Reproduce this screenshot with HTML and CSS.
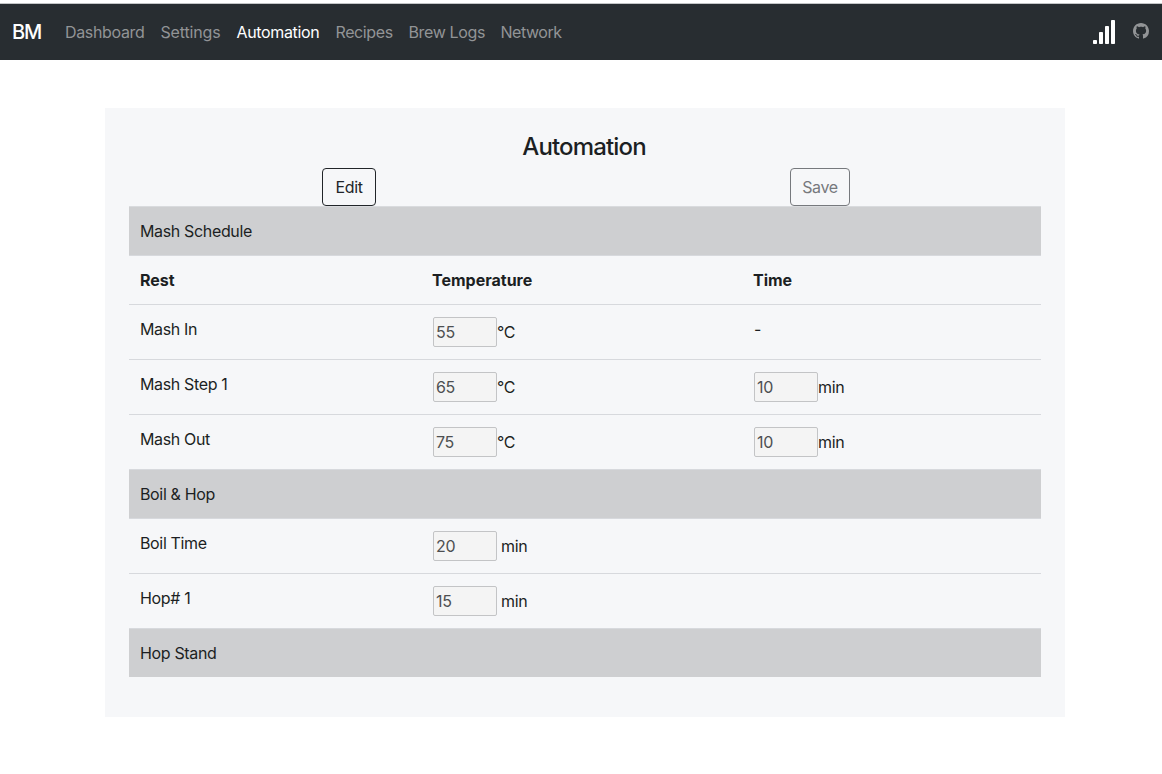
FILE: index.html
```
<!DOCTYPE html>
<html lang="en">
<head>
<meta charset="utf-8">
<title>BM - Automation</title>
<link rel="stylesheet" href="styles.css">
</head>
<body>
<nav class="navbar">
  <a class="brand">BM</a>
  <div class="nav-links">
    <a class="w-dashboard">Dashboard</a>
    <a class="w-settings">Settings</a>
    <a class="w-automation active">Automation</a>
    <a class="w-recipes">Recipes</a>
    <a class="w-logs">Brew Logs</a>
    <a class="w-network">Network</a>
  </div>
  <svg class="signal" width="22" height="24" viewBox="0 0 22 24" fill="#fff">
    <rect x="0" y="20" width="4" height="4" rx=".8"/>
    <rect x="6" y="12" width="4" height="12" rx=".8"/>
    <rect x="12" y="6" width="4" height="18" rx=".8"/>
    <rect x="18" y="0" width="4" height="24" rx=".8"/>
  </svg>
  <svg class="github" width="16" height="16" viewBox="0 0 16 16" fill="currentColor">
    <path d="M8 0C3.58 0 0 3.58 0 8c0 3.54 2.29 6.53 5.47 7.59.4.07.55-.17.55-.38 0-.19-.01-.82-.01-1.49-2.01.37-2.53-.49-2.69-.94-.09-.23-.48-.94-.82-1.13-.28-.15-.68-.52-.01-.53.63-.01 1.08.58 1.23.82.72 1.21 1.87.87 2.33.66.07-.52.28-.87.51-1.07-1.78-.2-3.64-.89-3.64-3.95 0-.87.31-1.59.82-2.15-.08-.2-.36-1.02.08-2.12 0 0 .67-.21 2.2.82.64-.18 1.32-.27 2-.27s1.36.09 2 .27c1.53-1.04 2.2-.82 2.2-.82.44 1.1.16 1.92.08 2.12.51.56.82 1.27.82 2.15 0 3.07-1.87 3.75-3.65 3.95.29.25.54.73.54 1.48 0 1.07-.01 1.93-.01 2.2 0 .21.15.46.55.38A8.01 8.01 0 0 0 16 8c0-4.42-3.58-8-8-8z"/>
  </svg>
</nav>
<main class="panel">
  <h1>Automation</h1>
  <div class="actions">
    <div><button class="btn">Edit</button></div>
    <div><button class="btn btn-save" disabled>Save</button></div>
  </div>
  <table class="schedule">
    <colgroup><col class="c1"><col class="c2"><col class="c3"></colgroup>
    <tbody>
      <tr class="band"><td colspan="3">Mash Schedule</td></tr>
      <tr><th>Rest</th><th>Temperature</th><th>Time</th></tr>
      <tr><td>Mash In</td><td><div class="field"><input value="55" disabled>°C</div></td><td>-</td></tr>
      <tr><td>Mash Step 1</td><td><div class="field"><input value="65" disabled>°C</div></td><td><div class="field"><input value="10" disabled>min</div></td></tr>
      <tr><td>Mash Out</td><td><div class="field"><input value="75" disabled>°C</div></td><td><div class="field"><input value="10" disabled>min</div></td></tr>
      <tr class="band"><td colspan="3">Boil &amp; Hop</td></tr>
      <tr><td>Boil Time</td><td><div class="field spaced"><input value="20" disabled>min</div></td><td></td></tr>
      <tr><td>Hop# 1</td><td><div class="field spaced"><input value="15" disabled>min</div></td><td></td></tr>
      <tr class="band last"><td colspan="3">Hop Stand</td></tr>
    </tbody>
  </table>
</main>
</body>
</html>
```
FILE: styles.css
```
* { box-sizing: border-box; }
body {
  margin: 0;
  padding-top: 3px;
  background: #fff;
  color: #1c1f23;
  font: 16px/24px Inter, "Liberation Sans", sans-serif;
  letter-spacing: -0.35px;
}
.navbar {
  display: flex;
  align-items: center;
  height: 57px;
  padding: 0 13px 0 12px;
  border-top: 1px solid #c4c6c7;
  background: #282d31;
}
.brand { width: 53px; color: #fff; font-size: 20px; font-weight: 500; letter-spacing: -1.2px; }
.nav-links { display: flex; flex: 1; color: #929496; white-space: nowrap; }
.nav-links .active { color: #fff; }
.w-dashboard { width: 95.5px; }
.w-settings { width: 76px; letter-spacing: -0.15px; }
.w-automation { width: 99px; }
.w-recipes { width: 73px; letter-spacing: -0.4px; }
.w-logs { width: 92px; }
.w-network { letter-spacing: -0.45px; }
.github { margin: -2px 0 0 18px; color: #929496; }
.panel {
  width: 960px;
  height: 609px;
  margin: 48px 97px 0 105px;
  padding: 24px;
  background: #f6f7f9;
}
h1 {
  margin: 0 2px 7px 0;
  font-size: 24px;
  font-weight: 500;
  line-height: 29px;
  letter-spacing: -0.85px;
  text-align: center;
}
.actions { display: grid; grid-template-columns: 468px 474px; margin-left: -14px; text-align: center; }
.actions > div { height: 38px; }
.btn {
  display: block;
  width: 54px;
  height: 38px;
  margin: 0 auto;
  padding: 0;
  border: 1px solid #212529;
  border-radius: 4px;
  background: transparent;
  color: #212529;
  font: inherit;
  letter-spacing: inherit;
}
.btn-save { width: 60px; border-color: #76797d; color: #76797d; }
.schedule { width: 912px; table-layout: fixed; border-collapse: separate; border-spacing: 0; border-top: 1px solid #d9dbde; }
.c1 { width: 292px; }
.c2 { width: 321px; }
.c3 { width: 299px; }
td, th { padding: 12px; border-bottom: 1px solid #d7d9dd; text-align: left; vertical-align: top; }
td:first-child, th:first-child { padding-left: 11px; }
th { font-weight: 700; letter-spacing: 0; }
th:not(:first-child) { padding-left: 11px; }
.band td { background: #cecfd1; }
.band.last td { border-bottom: 0; }
.field { display: flex; align-items: center; height: 30px; }
.field.spaced { gap: 4px; }
.field input {
  width: 64px;
  height: 30px;
  padding: 1px 2px;
  border: 1px solid #c3c4c6;
  border-radius: 2px;
  background: #f4f4f4;
  color: #4d4f51;
  font: inherit;
  letter-spacing: inherit;
}
```
